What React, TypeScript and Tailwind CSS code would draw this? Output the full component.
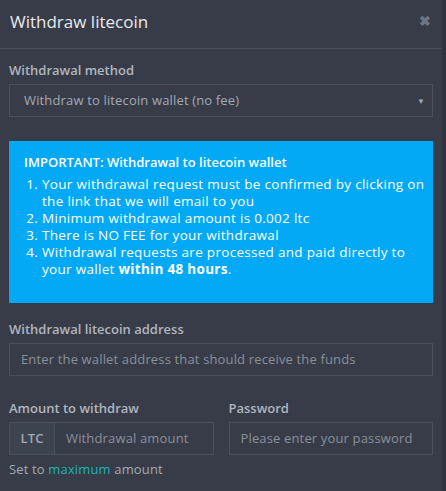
const FONT = { fontFamily: '"Open Sans", "Liberation Sans", sans-serif' };

/** Étapes affichées dans l'encart d'avertissement. */
const STEPS: React.ReactNode[] = [
  'Your withdrawal request must be confirmed by clicking on the link that we will email to you',
  'Minimum withdrawal amount is 0.002 ltc',
  'There is NO FEE for your withdrawal',
  <>
    Withdrawal requests are processed and paid directly to your wallet <b className="font-bold">within 48 hours</b>.
  </>,
];

export default function App() {
  return (
    <div className="h-[491px] w-[446px] overflow-hidden bg-[#2f333d]" style={FONT}>
      <div className="h-full w-[442px] bg-[#373c48]">
        <div className="flex h-[49px] items-center justify-between border-b border-[#4a4f5b] pb-[4px] pl-[10px] pr-[11px]">
          <h1 className="text-[17px] font-normal text-[#e8eaee]">Withdraw litecoin</h1>
          <span className="-mt-[3px] text-[14px] font-bold leading-none text-[#6f7582]">✖</span>
        </div>

        <div className="px-[9px] pt-[11px]">
          <Label>Withdrawal method</Label>
          <div className="mt-[4px] flex h-[33px] items-center justify-between border border-[#4a505c] pl-[14px] pr-[7px] text-[13px] tracking-[0.15px] text-[#a3a9b4]">
            <span>Withdraw to litecoin wallet (no fee)</span>
            <span className="text-[8px] text-[#a3a9b4]">▼</span>
          </div>

          <div className="mt-[24px] bg-[#03a9f4] pb-[25px] pl-[15px] pr-[4px] pt-[13px] text-white">
            <div className="text-[13px] font-semibold leading-[17px]">IMPORTANT: Withdrawal to litecoin wallet</div>
            <ol className="mt-[5px] list-decimal pl-[18px] text-[13.5px] leading-[17px] tracking-[0.3px]">
              {STEPS.map((s, i) => (
                <li key={i}>{s}</li>
              ))}
            </ol>
          </div>

          <div className="mt-[16px]">
            <Label>Withdrawal litecoin address</Label>
            <div className="mt-[4px] flex h-[33px] items-center border border-[#4a505c] px-[11px] text-[13px] tracking-[0.15px] text-[#8a909b]">
              Enter the wallet address that should receive the funds
            </div>
          </div>

          <div className="mt-[22px] grid grid-cols-2 gap-[15px]">
            <div>
              <Label>Amount to withdraw</Label>
              <div className="mt-[4px] flex h-[33px] border border-[#4a505c] text-[13px] tracking-[0.15px]">
                <span className="flex w-[45px] items-center justify-center border-r border-[#4a505c] bg-[#3e4350] font-semibold text-[#a3a9b4]">LTC</span>
                <span className="flex items-center pl-[11px] text-[#8a909b]">Withdrawal amount</span>
              </div>
              <p className="mt-[4px] text-[13px] leading-[20px] tracking-[0.15px] text-[#a3a9b4]">
                Set to <span className="text-[#1cb3b8]">maximum</span> amount
              </p>
            </div>
            <div>
              <Label>Password</Label>
              <div className="mt-[4px] flex h-[33px] items-center border border-[#4a505c] px-[11px] text-[13px] tracking-[0.15px] text-[#8a909b]">
                Please enter your password
              </div>
            </div>
          </div>
        </div>
      </div>
    </div>
  );
}

function Label({ children }: { children: React.ReactNode }) {
  return <div className="text-[13px] font-semibold leading-[20px] text-[#b0b5bf]">{children}</div>;
}
